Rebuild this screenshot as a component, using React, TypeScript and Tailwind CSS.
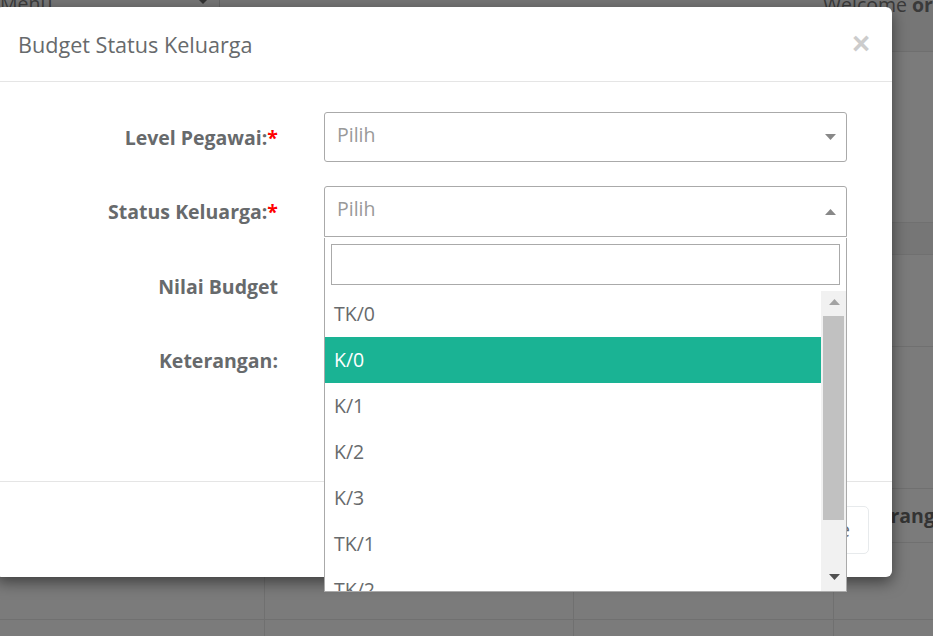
import React from "react";

const options = ["TK/0", "K/0", "K/1", "K/2", "K/3", "TK/1", "TK/2"];

function Label({ text, req }: { text: string; req?: boolean }) {
  return (
    <div className="w-[282px] h-[50px] flex items-center justify-end font-bold text-[19.5px] text-[#676a6c] shrink-0 pt-[1px]">
      {text}
      {req && <span className="text-[#ff0000]">*</span>}
    </div>
  );
}

function Caret({ up, color }: { up?: boolean; color: string }) {
  return (
    <svg width="11" height="6" viewBox="0 0 11 6" className="block">
      {up ? <polygon points="0,6 11,6 5.5,0" fill={color} /> : <polygon points="0,0 11,0 5.5,6" fill={color} />}
    </svg>
  );
}

export default function App() {
  return (
    <div className="w-[933px] h-[636px] relative overflow-hidden bg-[#7b7b7b] font-['Open_Sans',sans-serif]">
      {/* background page */}
      <div className="h-[52px] flex border-b border-[#6f6f6f] bg-[#767676]">
        <div className="w-[220px] h-[14px] border-r border-[#666] flex items-end justify-between pr-[10px] -mt-[6px] overflow-hidden">
          <span className="text-[19.5px] leading-[20px] text-[#3c3c3c] -mb-[6px]">Menu</span>
          <span className="mb-[4px]">
            <svg width="12" height="6" viewBox="0 0 12 6"><polygon points="0,0 12,0 6,6" fill="#333" /></svg>
          </span>
        </div>
        <div className="flex-1 pl-[603px] -mt-[7px] text-[19.5px] leading-[24px] text-[#3a3a3a] whitespace-nowrap overflow-hidden">
          Welcome <b>orang</b>
        </div>
      </div>
      <div className="h-[170px]" />
      <div className="h-[33px] bg-[#767676] border-y border-[#707070]" />
      <div className="h-[92px] border-b border-[#707070]" />
      <div className="h-[142px] border-b border-[#707070]" />
      <div className="h-[54px] border-b border-[#707070] flex items-center pl-[846px] font-bold text-[19.5px] text-[#333] whitespace-nowrap">
        Keterangan
      </div>
      <div className="h-[77px] border-b border-[#707070] grid grid-cols-[265px_309px_260px_1fr]">
        <div className="border-r border-[#707070]" />
        <div className="border-r border-[#707070]" />
        <div className="border-r border-[#707070]" />
        <div />
      </div>
      <div className="h-[40px] grid grid-cols-[265px_309px_260px_1fr]">
        <div className="border-r border-[#707070]" />
        <div className="border-r border-[#707070]" />
        <div className="border-r border-[#707070]" />
        <div />
      </div>

      {/* modal */}
      <div className="absolute left-[-4px] top-[7px] w-[896px] bg-white rounded-[6px] shadow-[0_5px_15px_rgba(0,0,0,0.5)]">
        <div className="h-[75px] border-b border-[#e5e5e5] flex items-center justify-between px-[22px]">
          <div className="text-[21.6px] text-[#676a6c] pt-[3px]">Budget Status Keluarga</div>
          <div className="font-['Liberation_Sans',sans-serif] font-bold text-[31px] leading-none text-[#cccccc] -mt-[1px]">×</div>
        </div>
        <div className="pt-[30px] pb-[30px] flex flex-col gap-[24px]">
          <div className="flex">
            <Label text="Level Pegawai:" req />
            <div className="ml-[46px] w-[523px] h-[50px] border border-[#aaaaaa] rounded-[3px] flex items-center justify-between pl-[12px] pr-[10px]">
              <span className="text-[19.5px] text-[#999] -mt-[5px]">Pilih</span>
              <Caret color="#888" />
            </div>
          </div>
          <div className="flex">
            <Label text="Status Keluarga:" req />
            <div className="ml-[46px] w-[523px] h-[51px] border border-[#aaaaaa] rounded-t-[3px] flex items-center justify-between pl-[12px] pr-[10px]">
              <span className="text-[19.5px] text-[#999] -mt-[5px]">Pilih</span>
              <Caret up color="#888" />
            </div>
          </div>
          <div className="flex">
            <Label text="Nilai Budget" />
            <div className="ml-[46px] w-[523px] h-[50px] border border-[#e5e6e7]" />
          </div>
          <div className="flex">
            <Label text="Keterangan:" />
            <div className="ml-[46px] w-[523px] h-[116px] border border-[#e5e6e7]" />
          </div>
        </div>
        <div className="h-[96px] border-t border-[#e5e5e5] flex items-center justify-end pr-[23px]">
          <div className="h-[48px] px-[18px] border border-[#e7eaec] rounded-[5px] flex items-center text-[19.5px] text-[#676a6c]">
            Close
          </div>
        </div>
      </div>

      {/* select2 dropdown */}
      <div className="absolute left-[324px] top-[238px] w-[523px] bg-white border-x border-b border-[#aaaaaa]">
        <div className="px-[6px] pt-[6px] pb-[6px]">
          <div className="h-[41px] border border-[#aaaaaa]" />
        </div>
        <div className="h-[300px] flex">
          <div className="flex-1 overflow-hidden">
            {options.map((o) => (
              <div
                key={o}
                className={`h-[46px] shrink-0 flex items-center pl-[9px] text-[19.5px] ${o === "K/0" ? "bg-[#1ab394] text-white" : "text-[#676a6c]"}`}
              >
                {o}
              </div>
            ))}
          </div>
          <div className="w-[25px] bg-[#f1f1f1] flex flex-col">
            <div className="h-[25px] flex items-center justify-center pb-[3px] pl-[1px]">
              <Caret up color="#a3a3a3" />
            </div>
            <div className="h-[204px] ml-[2px] w-[21px] bg-[#c1c1c1]" />
            <div className="flex-1 flex items-end justify-center pb-[11px] pl-[1px]">
              <Caret color="#505050" />
            </div>
          </div>
        </div>
      </div>
    </div>
  );
}
